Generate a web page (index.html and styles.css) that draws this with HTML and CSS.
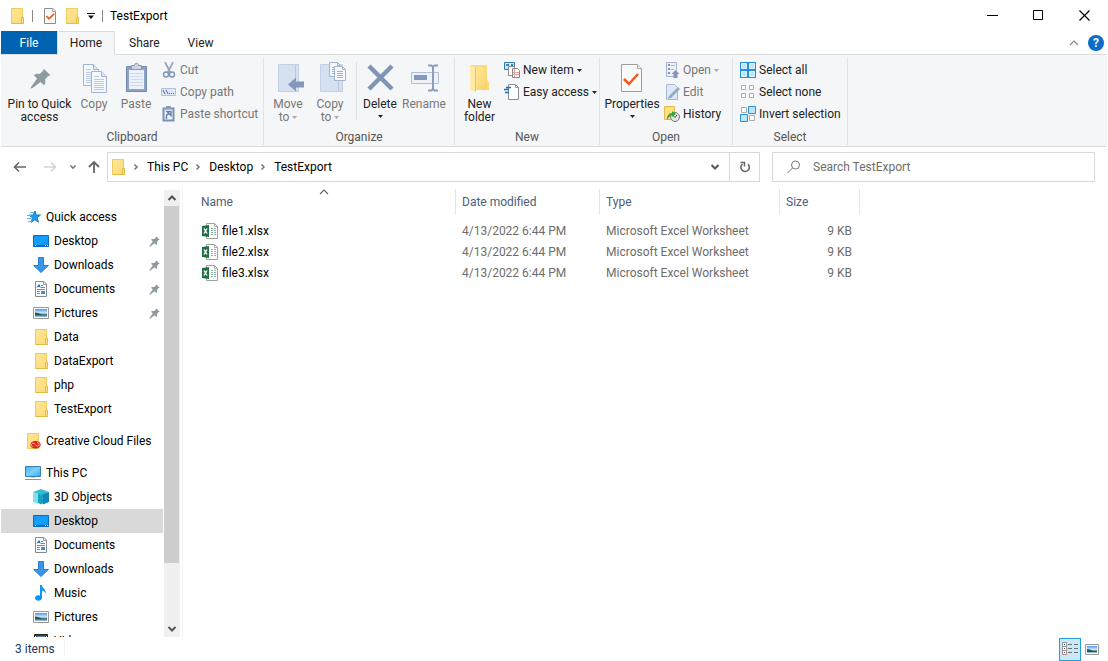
FILE: index.html
```html
<!DOCTYPE html>
<html lang="en">
<head>
<meta charset="utf-8">
<meta name="viewport" content="width=device-width, initial-scale=1">
<title>TestExport</title>
<link rel="stylesheet" href="styles.css">
</head>
<body>
<svg class="defs" aria-hidden="true">
  <defs>
    <linearGradient id="g-folder" x1="0" y1="0" x2="1" y2="1"><stop offset="0" stop-color="#ffe594"/><stop offset="1" stop-color="#fbdc7b"/></linearGradient>
    <linearGradient id="g-screen" x1="0" y1="0" x2="1" y2="1"><stop offset="0" stop-color="#1a93f5"/><stop offset=".5" stop-color="#11a2ff"/><stop offset="1" stop-color="#0c8ceb"/></linearGradient>
    <linearGradient id="g-pc" x1="0" y1="0" x2="1" y2="1"><stop offset="0" stop-color="#3db4f7"/><stop offset=".5" stop-color="#7dd0fb"/><stop offset="1" stop-color="#33abf3"/></linearGradient>
    <linearGradient id="g-photo" x1="0" y1="0" x2="0" y2="1"><stop offset="0" stop-color="#4d97ee"/><stop offset=".5" stop-color="#d4e8f7"/><stop offset=".65" stop-color="#6d9a9c"/><stop offset="1" stop-color="#9cc1d6"/></linearGradient>
    <linearGradient id="g-new" x1="0" y1="0" x2="1" y2="1"><stop offset="0" stop-color="#ffe79b"/><stop offset="1" stop-color="#f9d265"/></linearGradient>
    <symbol id="folder" viewBox="0 0 16 16"><path d="M2.500.5h11v9h1v6h-12z" fill="url(#g-folder)" stroke="#edcb5c"/><path d="M12.500 15V9.500h2v6h-12" fill="#fbe08a" stroke="#e3bc43"/></symbol>
    <symbol id="check" viewBox="0 0 14 16"><path d="M1.500.5h8.500l2.500 2.500v12.500h-11z" fill="#fafafa" stroke="#8d8d8d"/><path d="M9.500.5v3h3" fill="#fff" stroke="#aaa"/><path d="M3.500 8l2.500 2.800 5-5" fill="none" stroke="#ea5a1c" stroke-width="1.700"/></symbol>
    <symbol id="pin" viewBox="0 0 16 16"><path d="M10.500.5l5 5-1.800.7-2.200 2.600c.6 1.800.2 3.200-.9 4.400L8 10.700 2 15.300.5 15.700l.4-1.500L5.400 8 2.900 5.500c1.200-1.100 2.600-1.500 4.400-.9l2.600-2.300z" fill="#8f9ba3"/></symbol>
    <symbol id="desktop" viewBox="0 0 16 12"><path d="M.5.5h15v11H.5z" fill="url(#g-screen)" stroke="#0b6cba"/><path d="M1 10.500h14" stroke="#0b6cba"/><path d="M2 10.500h1M12 10.500h1M14 10.500h1" stroke="#fff"/></symbol>
    <symbol id="download" viewBox="0 0 16 16"><path d="M5.500.5h5v8h4.800L8 15.500.7 8.500h4.800z" fill="#3894e8" stroke="#2a7fce"/></symbol>
    <symbol id="document" viewBox="0 0 14 16"><path d="M1.500.5h8.500l2.500 2.500v12.500h-11z" fill="#fff" stroke="#858b90"/><path d="M9.500.5v3h3" fill="none" stroke="#999"/><path d="M3 6.500l2-3 1.200 3M4 5.500h2" fill="none" stroke="#1774bb"/><path d="M7 4.500h2M7 6.500h4M3 8.500h8" stroke="#3f9ada"/><path d="M3 10.500h3M3 12.500h3" stroke="#888"/><path d="M7 10h4v3H7z" fill="#3e93ca"/></symbol>
    <symbol id="picture" viewBox="0 0 16 12"><path d="M.5.5h15v11H.5z" fill="#fff" stroke="#989898"/><path d="M2 2h12v8H2z" fill="url(#g-photo)"/><path d="M2 5.500l3 .5 4 1.500h5v1H2z" fill="#2b545c"/></symbol>
    <symbol id="star" viewBox="0 0 16 16"><path d="M10 2l1.200 4h4.300l-3.400 2.700 1.400 4.500-3.700-2.500-3.600 2.700 1.200-4.600L4 6.200l4.200-.2z" fill="#209dea" stroke="#1582c8" stroke-width="1"/><path d="M5 3.500h4M2 6.500h4M2 9.500h4M3 12.500h4" stroke="#63b7eb"/></symbol>
    <symbol id="creative" viewBox="0 0 16 16"><path d="M2.500.5h11v15h-11z" fill="url(#g-folder)" stroke="#edcb5c"/><ellipse cx="10.500" cy="11.800" rx="5.200" ry="3.800" fill="#dd2118"/><path d="M12 9.800c2.500-.6 3.200 3 .8 3.500-2 .2-2.800-3.400-5-3.100-2.300.4-2 3.500.4 3.300" fill="none" stroke="#ffd0b0" stroke-width=".9"/></symbol>
    <symbol id="pc" viewBox="0 0 16 16"><path d="M.5 1.500h15v10H.5z" fill="url(#g-pc)" stroke="#3a80ae"/><path d="M6 12h4v1H6z" fill="#c6d0d6"/><path d="M0 14.500h16" stroke="#8597a5"/></symbol>
    <symbol id="cube" viewBox="0 0 16 16"><path d="M0 3l8-3 8 3-8 3z" fill="#35bdd0"/><path d="M0 3l5 1.500V15l-5-2z" fill="#7fe2ee"/><path d="M5 4.500l3 1 3-1v9.300L8 15.500l-3-1.700z" fill="#16a5bc"/><path d="M16 3l-6 2v10.500l6-2.500z" fill="#1384bd"/></symbol>
    <symbol id="music" viewBox="0 0 16 16"><path d="M7 0h2c0 3.500 4.500 4 3.500 9-.4-2-1.700-3.200-3.500-3.500v7C9 17 2 16.500 2 13c0-2.300 3-3.300 5-2.300z" fill="#0b98f4"/></symbol>
    <symbol id="video" viewBox="0 0 16 16"><path d="M1.500 1.500h13v13h-13z" fill="#38424a" stroke="#222"/><path d="M4 3h8v10H4z" fill="#5681c3"/><path d="M2.500 3v12M13.500 3v12" stroke="#fff" stroke-dasharray="1 2"/></symbol>
    <symbol id="excel" viewBox="0 0 16 16"><path d="M4.500.5h8l3 3v12h-11z" fill="#fff" stroke="#a0a0a0"/><path d="M12.500.5v3h3" fill="none" stroke="#aaa"/><path d="M9 5.500h2M12 5.500h2M9 7.500h2M12 7.500h2M9 9.500h2M12 9.500h2M9 11.500h2M12 11.500h2" stroke="#8cb59d"/><path d="M0 3l7-1v12l-7-1z" fill="#1c7145"/><path d="M2 5.500l3 5M5 5.500l-3 5" stroke="#fff" stroke-width="1.400"/></symbol>
    <symbol id="page" viewBox="0 0 18 22"><path d="M1.500.5h10l5 5v16h-15z" fill="#f4f7fc" stroke="#a3b4ce"/><path d="M11.500.5v5h5" fill="#dce5f3" stroke="#a3b4ce"/><path d="M4 5.500h5M4 8.500h10M4 10.500h10M4 12.500h10M4 14.500h10M4 16.500h10M4 18.500h10" stroke="#bccae0"/></symbol>
    <symbol id="page-small" viewBox="0 0 12 15"><path d="M.5.5h8l3 3v11H.5z" fill="#f4f7fc" stroke="#a3b4ce"/><path d="M8.500.5v3h3" fill="none" stroke="#a3b4ce"/><path d="M3 5.500h6M3 7.500h6M3 9.500h6M3 11.500h6" stroke="#9fb2cf"/></symbol>
    <symbol id="chev-right" viewBox="0 0 6 8"><path d="M1.500 1.500L4 4 1.500 6.500" fill="none" stroke="#777" stroke-width="1.500"/></symbol>
    <symbol id="chev-down" viewBox="0 0 10 8"><path d="M1.500 2L5 5.500 8.500 2" fill="none" stroke="currentColor" stroke-width="2"/></symbol>
    <symbol id="chev-up" viewBox="0 0 10 8"><path d="M1 6l4-4 4 4" fill="none" stroke="currentColor" stroke-width="1.200"/></symbol>
    <symbol id="tri" viewBox="0 0 5 3"><path d="M0 0h5L2.500 3z" fill="currentColor"/></symbol>
  </defs>
</svg>

<header class="titlebar">
  <svg class="i16"><use href="#folder"/></svg>
  <span class="tick"></span>
  <button class="quick" aria-label="Properties"><svg class="i14"><use href="#check"/></svg></button>
  <button class="quick" aria-label="New folder"><svg class="i16"><use href="#folder"/></svg></button>
  <button class="quick" aria-label="Customize toolbar"><svg class="custom" viewBox="0 0 8 6"><path d="M0 .5h8" stroke="#111"/><path d="M1 2.500h6L4 6z" fill="#111"/></svg></button>
  <span class="tick"></span>
  <h1 class="title">TestExport</h1>
  <div class="winbuttons">
    <button aria-label="Minimize"><svg viewBox="0 0 11 11"><path d="M0 5.500h11" stroke="#000"/></svg></button>
    <button aria-label="Maximize"><svg viewBox="0 0 11 11"><path d="M.5.5h9v9h-9z" fill="none" stroke="#000"/></svg></button>
    <button aria-label="Close"><svg viewBox="0 0 11 11"><path d="M.5.5l10 10M10.500.5l-10 10" stroke="#000" stroke-width="1.200"/></svg></button>
  </div>
</header>

<nav class="tabs">
  <button class="tab file">File</button>
  <button class="tab active">Home</button>
  <button class="tab">Share</button>
  <button class="tab">View</button>
  <div class="tabtools">
    <button class="collapse" aria-label="Collapse ribbon"><svg class="chev"><use href="#chev-up"/></svg></button>
    <button class="help" aria-label="Help">?</button>
  </div>
</nav>

<section class="ribbon">
  <div class="group clipboard">
    <div class="tools">
      <button class="big pinbtn"><svg class="i32" viewBox="0 0 32 32"><use href="#pin" x="6" y="6" width="21" height="21"/></svg><span>Pin to Quick access</span></button>
      <button class="big copybtn off"><svg class="i32" viewBox="0 0 32 32"><use href="#page" x="4" y="2" width="18" height="22"/><use href="#page" x="12" y="9" width="18" height="22"/></svg><span>Copy</span></button>
      <button class="big pastebtn off"><svg class="i32" viewBox="0 0 32 32"><path d="M6.500 4.500h20v25h-20z" fill="#8ea2c3" stroke="#7389ae"/><path d="M9 8h15v19H9z" fill="#edf2fa"/><path d="M10 11.500h13M10 14.500h13M10 17.500h13M10 20.500h13M10 23.500h13" stroke="#cfdaea"/><path d="M11.500 7.500v-4h3c0-3 4-3 4 0h3v4z" fill="#cbd4e2" stroke="#8897af"/></svg><span>Paste</span></button>
      <div class="smalls">
        <button class="small off"><svg class="i16" viewBox="0 0 16 16"><path d="M4 0l5.500 11M12 0L6.500 11" stroke="#94a5bd" stroke-width="1.700"/><circle cx="5" cy="12.500" r="2.500" fill="none" stroke="#8297b7" stroke-width="1.500"/><circle cx="11" cy="12.500" r="2.500" fill="none" stroke="#8297b7" stroke-width="1.500"/></svg>Cut</button>
        <button class="small off"><svg class="i16" viewBox="0 0 16 16"><path d="M.5 4.500h14v7H.5z" fill="#dce6f4" stroke="#b2c0d6"/><path d="M2 6l2 4M5 6l2 4M8 9.500h1M10 9.500h1M12 9.500h1" stroke="#596f91"/></svg>Copy path</button>
        <button class="small off"><svg class="i16" viewBox="0 0 16 16"><path d="M2.500 2.500h10v12h-10z" fill="#eef3fa" stroke="#7b91b5" stroke-width="2"/><path d="M5 0h5v3H5z" fill="#8b9bb5"/><path d="M5.500 13V10c0-1 1-2 2.500-2M6 5.500h4v4z" fill="none" stroke="#6883ad" stroke-width="1.500"/></svg>Paste shortcut</button>
      </div>
    </div>
    <div class="caption">Clipboard</div>
  </div>

  <div class="group organize">
    <div class="tools">
      <button class="big move off"><svg class="i32" viewBox="0 0 32 32"><path d="M6.500 2.500h20v27h-20z" fill="#d5e0f1" stroke="#c3d0e5"/><path d="M23.500 3v26" stroke="#b9c8df"/><path d="M16 22.500l8-7v4h8v6h-8v4z" fill="#8498ba"/></svg><span>Move<br>to <svg class="tri"><use href="#tri"/></svg></span></button>
      <button class="big move off"><svg class="i32" viewBox="0 0 32 32"><path d="M6.500 2.500h22v27h-22z" fill="#d5e0f1" stroke="#c3d0e5"/><path d="M24.500 3v26" stroke="#b9c8df"/><use href="#page-small" x="15" y="0" width="12" height="15"/><use href="#page-small" x="20" y="4" width="12" height="15"/></svg><span>Copy<br>to <svg class="tri"><use href="#tri"/></svg></span></button>
      <span class="rule"></span>
      <button class="big delete"><svg class="i32" viewBox="0 0 32 32"><path d="M5 4l23 23M28 4L5 27" stroke="#8094b5" stroke-width="4.500"/></svg><span>Delete</span><svg class="tri"><use href="#tri"/></svg></button>
      <button class="big rename off"><svg class="i32" viewBox="0 0 32 32"><path d="M3.500 10.500h27v11h-27z" fill="#eef2f8" stroke="#b0c0d8"/><path d="M6 13h13v5H6z" fill="#8298bd"/><path d="M20 3.500h3.500L25 5l1.500-1.500H30M20 28.500h3.500L25 27l1.500 1.500H30M25 5v22" fill="none" stroke="#899ebe" stroke-width="2"/></svg><span>Rename</span></button>
    </div>
    <div class="caption">Organize</div>
  </div>

  <div class="group new">
    <div class="tools">
      <button class="big newfolder"><svg class="i32" viewBox="0 0 32 32"><path d="M6 3h17v15l2 2v8H6z" fill="#fbda7c"/><path d="M6 3l6 3v24l-6-2z" fill="#ffe9a6"/><path d="M12 6l3-1h7v-2h1v25H12z" fill="url(#g-new)"/><path d="M12 6v24l-1-1V6z" fill="#eec65b"/></svg><span>New folder</span></button>
      <div class="smalls">
        <button class="small"><svg class="i16" viewBox="0 0 16 16"><path d="M.5.5h10v7H.5z" fill="#cee8f7" stroke="#3179a7"/><path d="M2 2h3v2H2zM7 2h2v2H7z" fill="#2e89bd"/><path d="M4.500 4.500h6v9h-6z" fill="#fff" stroke="#888"/><path d="M8.500 6.500h5l2 2v7h-7z" fill="#fff" stroke="#888"/><path d="M10.500 7v8M9 10.500h6M9 12.500h6" stroke="#e6a2a2"/></svg>New item<svg class="tri"><use href="#tri"/></svg></button>
        <button class="small"><svg class="i16" viewBox="0 0 16 16"><path d="M4.500.5h7l3 3v12h-10z" fill="#fff" stroke="#8e8e8e"/><path d="M11.500.5v3h3" fill="none" stroke="#999"/><path d="M2 3.500h5M0 5.500h5M1 8.500h4" stroke="#1c6fb0" stroke-width="1.300"/></svg>Easy access<svg class="tri"><use href="#tri"/></svg></button>
      </div>
    </div>
    <div class="caption">New</div>
  </div>

  <div class="group open">
    <div class="tools">
      <button class="big props"><svg class="i32" viewBox="0 0 32 32"><path d="M5.500 2.500h16l4 4v23h-20z" fill="#fafafa" stroke="#9d9d9d"/><path d="M21.500 2.500v4h4" fill="#eee" stroke="#aaa"/><path d="M8 17l5 5 9-10" fill="none" stroke="#f05a1a" stroke-width="2.500"/></svg><span>Properties</span><svg class="tri"><use href="#tri"/></svg></button>
      <div class="smalls">
        <button class="small off"><svg class="i16" viewBox="0 0 16 16"><path d="M2.500.5h10v14h-10z" fill="#edf2f8" stroke="#a7b6cd"/><path d="M4 2h2v2H4zM4 6h2v2H4zM4 10h2v2H4z" fill="#8196b7"/><path d="M7 3.500h4M7 7.500h3" stroke="#a7b6cd"/><path d="M7.500 12l4-4 4 4h-2v4h-4v-4z" fill="#8297bb"/></svg>Open<svg class="tri"><use href="#tri"/></svg></button>
        <button class="small off"><svg class="i16" viewBox="0 0 16 16"><path d="M2.500.5h8l3 3v12h-11z" fill="#dfe8f5" stroke="#a7b9d3"/><path d="M5 12l9-9 2 2-9 9-3 1z" fill="#94a9c8"/></svg>Edit</button>
        <button class="small"><svg class="i16" viewBox="0 0 16 16"><path d="M.5.5h10v13H.5z" fill="#ffdf7e" stroke="#e2bc48"/><circle cx="11" cy="11" r="4.500" fill="#e0e5e7" stroke="#737b80"/><path d="M13 9l-2 2.500L9.500 10" fill="none" stroke="#555"/><path d="M3 14c-.5-4 2-7 5-7V5l4 3-4 3V9.500c-2 0-3.500 2-5 4.500z" fill="#2dab35"/></svg>History</button>
      </div>
    </div>
    <div class="caption">Open</div>
  </div>

  <div class="group select">
    <div class="tools">
      <div class="smalls">
        <button class="small"><svg class="i16" viewBox="0 0 16 16"><path d="M0 0h16v16H0z" fill="#2490df"/><path d="M1.500 1.500h5v5h-5zM9.500 1.500h5v5h-5zM1.500 9.500h5v5h-5zM9.500 9.500h5v5h-5z" fill="#bfe5fa" stroke="#dff4fe"/></svg>Select all</button>
        <button class="small"><svg class="i16" viewBox="0 0 16 16"><path d="M1.500 1.500h4v4h-4zM9.500 1.500h4v4h-4zM1.500 9.500h4v4h-4zM9.500 9.500h4v4h-4z" fill="#fff" stroke="#aaa"/></svg>Select none</button>
        <button class="small"><svg class="i16" viewBox="0 0 16 16"><path d="M1.500 1.500h5v5h-5zM9.500 9.500h5v5h-5z" fill="#fff" stroke="#aaa"/><path d="M8.500.5h7v7h-7zM.5 8.500h7v7h-7z" fill="#bfe5fa" stroke="#2490df"/></svg>Invert selection</button>
      </div>
    </div>
    <div class="caption">Select</div>
  </div>
</section>

<section class="navbar">
  <div class="arrows">
    <button aria-label="Back"><svg class="arrow" viewBox="0 0 14 14"><path d="M13 7H1.500M6 2.500L1.500 7 6 11.500" fill="none" stroke="#666" stroke-width="1.600"/></svg></button>
    <button aria-label="Forward"><svg class="arrow" viewBox="0 0 14 14"><path d="M1 7h11.500M8 2.500L12.500 7 8 11.500" fill="none" stroke="#d3d3d3" stroke-width="1.600"/></svg></button>
    <button class="recent" aria-label="Recent locations"><svg viewBox="0 0 10 8"><use href="#chev-down"/></svg></button>
    <button class="up" aria-label="Up"><svg class="arrow" viewBox="0 0 14 14"><path d="M7 13V2M2 7l5-5 5 5" fill="none" stroke="#666" stroke-width="1.800"/></svg></button>
  </div>
  <div class="address">
    <svg class="i16"><use href="#folder"/></svg>
    <svg class="sep"><use href="#chev-right"/></svg>
    <a href="#pc-root">This PC</a>
    <svg class="sep"><use href="#chev-right"/></svg>
    <a href="#desktop-root">Desktop</a>
    <svg class="sep"><use href="#chev-right"/></svg>
    <a href="#testexport">TestExport</a>
    <button class="drop" aria-label="Previous locations"><svg class="chev"><use href="#chev-down"/></svg></button>
    <button class="refresh" aria-label="Refresh"><svg viewBox="0 0 12 12"><path d="M9 3.200A4.200 4.200 0 1 1 3.500 3" fill="none" stroke="#666" stroke-width="1.600"/><path d="M1.500 1.500h4v4" fill="none" stroke="#666" stroke-width="1.500"/></svg></button>
  </div>
  <label class="search">
    <svg viewBox="0 0 14 14"><circle cx="8.500" cy="5" r="4" fill="none" stroke="#777"/><path d="M5.500 8L.5 13" stroke="#777"/></svg>
    <input type="text" placeholder="Search TestExport" aria-label="Search TestExport">
  </label>
</section>

<main class="main">
  <aside class="side">
    <div class="tree">
      <ul>
        <li class="root"><a href="#q"><svg class="i16"><use href="#star"/></svg>Quick access</a></li>
        <li><a href="#q1"><svg class="i16"><use href="#desktop"/></svg>Desktop<svg class="pin"><use href="#pin"/></svg></a></li>
        <li><a href="#q2"><svg class="i16"><use href="#download"/></svg>Downloads<svg class="pin"><use href="#pin"/></svg></a></li>
        <li><a href="#q3"><svg class="i16"><use href="#document"/></svg>Documents<svg class="pin"><use href="#pin"/></svg></a></li>
        <li><a href="#q4"><svg class="i16"><use href="#picture"/></svg>Pictures<svg class="pin"><use href="#pin"/></svg></a></li>
        <li><a href="#q5"><svg class="i16"><use href="#folder"/></svg>Data</a></li>
        <li><a href="#q6"><svg class="i16"><use href="#folder"/></svg>DataExport</a></li>
        <li><a href="#q7"><svg class="i16"><use href="#folder"/></svg>php</a></li>
        <li><a href="#q8"><svg class="i16"><use href="#folder"/></svg>TestExport</a></li>
      </ul>
      <ul>
        <li class="root"><a href="#c"><svg class="i16"><use href="#creative"/></svg>Creative Cloud Files</a></li>
      </ul>
      <ul>
        <li class="root"><a href="#p"><svg class="i16"><use href="#pc"/></svg>This PC</a></li>
        <li><a href="#p1"><svg class="i16"><use href="#cube"/></svg>3D Objects</a></li>
        <li class="current"><a href="#p2"><svg class="i16"><use href="#desktop"/></svg>Desktop</a></li>
        <li><a href="#p3"><svg class="i16"><use href="#document"/></svg>Documents</a></li>
        <li><a href="#p4"><svg class="i16"><use href="#download"/></svg>Downloads</a></li>
        <li><a href="#p5"><svg class="i16"><use href="#music"/></svg>Music</a></li>
        <li><a href="#p6"><svg class="i16"><use href="#picture"/></svg>Pictures</a></li>
        <li><a href="#p7"><svg class="i16"><use href="#video"/></svg>Videos</a></li>
      </ul>
    </div>
    <div class="scroll">
      <button aria-label="Scroll up"><svg class="chev" viewBox="0 0 10 8"><path d="M1.500 6L5 2.500 8.500 6" fill="none" stroke="#505050" stroke-width="2"/></svg></button>
      <div class="track"><div class="thumb"></div></div>
      <button aria-label="Scroll down"><svg class="chev"><use href="#chev-down"/></svg></button>
    </div>
  </aside>
  <section class="files">
    <table>
      <thead>
        <tr>
          <th class="c-name">Name<svg class="sort"><use href="#chev-up"/></svg></th>
          <th class="c-date">Date modified</th>
          <th class="c-type">Type</th>
          <th class="c-size">Size</th>
          <th class="c-rest"></th>
        </tr>
      </thead>
      <tbody>
        <tr><td><span class="fname"><svg class="i16"><use href="#excel"/></svg>file1.xlsx</span></td><td>4/13/2022 6:44 PM</td><td>Microsoft Excel Worksheet</td><td class="num">9 KB</td><td></td></tr>
        <tr><td><span class="fname"><svg class="i16"><use href="#excel"/></svg>file2.xlsx</span></td><td>4/13/2022 6:44 PM</td><td>Microsoft Excel Worksheet</td><td class="num">9 KB</td><td></td></tr>
        <tr><td><span class="fname"><svg class="i16"><use href="#excel"/></svg>file3.xlsx</span></td><td>4/13/2022 6:44 PM</td><td>Microsoft Excel Worksheet</td><td class="num">9 KB</td><td></td></tr>
      </tbody>
    </table>
  </section>
</main>

<footer class="status">
  <span class="count">3 items</span>
  <div class="views">
    <button class="view on" aria-label="Details view"><svg viewBox="0 0 16 14"><path d="M.5.5h4v4h-4zM.5 4.500h4v4h-4zM.5 8.500h4v4h-4z" fill="#fff" stroke="#999"/><path d="M2 2.500h1M2 6.500h1" stroke="#456"/><path d="M2 10.500h1" stroke="#c22"/><path d="M6 2.500h4M12 2.500h4M6 6.500h4M12 6.500h4M6 10.500h4M12 10.500h4" stroke="#707070"/></svg></button>
    <button class="view" aria-label="Large icons view"><svg viewBox="0 0 14 11"><path d="M.5.5h13v10H.5z" fill="#fff" stroke="#989898"/><path d="M2 2h10v7H2z" fill="url(#g-photo)"/><path d="M2 5l3 .5L8 7h4v1H2z" fill="#2b545c"/></svg></button>
  </div>
</footer>
</body>
</html>
```
FILE: styles.css
```css
* { box-sizing: border-box; }
body {
  margin: 0;
  padding: 0 1px;
  height: 100vh;
  display: flex;
  flex-direction: column;
  overflow: hidden;
  background: #fff;
  color: #000;
  font: 12px/16px Roboto, "Open Sans", sans-serif;
}
button, input { font: inherit; color: inherit; border: 0; background: none; padding: 0; margin: 0; }
a { color: inherit; text-decoration: none; }
ul { list-style: none; margin: 0; padding: 0; }
svg { display: block; flex: none; }
.defs { position: absolute; width: 0; height: 0; }
.i16 { width: 16px; height: 16px; }
.i14 { width: 14px; height: 16px; }
.i32 { width: 32px; height: 32px; }
.chev { width: 10px; height: 8px; color: #555; }
.tri { display: inline-block; width: 5px; height: 3px; vertical-align: middle; }

.titlebar { display: flex; align-items: center; flex: none; height: 31px; padding-left: 8px; }
.tick { width: 1px; height: 12px; margin: 0 10px 0 7px; background: #888; }
.quick { margin-right: 7px; }
.quick + .quick + .quick { margin-right: 0; }
.custom { width: 8px; height: 6px; }
.title { margin: 0 0 0 -3px; font-size: 12px; font-weight: 400; }
.winbuttons { display: flex; margin-left: auto; }
.winbuttons button { width: 46px; height: 30px; display: grid; place-items: center; }
.winbuttons svg { width: 11px; height: 11px; }

.tabs { display: flex; flex: none; height: 24px; border-bottom: 1px solid #dadbdc; }
.tab { height: 24px; padding: 0 14px; color: #222; }
.tab.file { width: 56px; height: 23px; background: #0063b1; color: #fff; }
.tab.active { width: 58px; padding: 0 0 1px; background: #f5f6f7; border: 1px solid #dadbdc; border-bottom: 0; }
.tabtools { display: flex; align-items: center; gap: 9px; margin-left: auto; padding-right: 3px; }
.collapse .chev { color: #888; }
.help { width: 16px; height: 16px; border-radius: 50%; background: #0b6cca; color: #fff; font-weight: 700; line-height: 16px; }

.ribbon { display: flex; flex: none; height: 92px; background: #f5f6f7; border-bottom: 1px solid #dadbdc; }
.group { display: flex; flex: none; flex-direction: column; justify-content: space-between; margin: 2px 0 1px; padding-top: 2px; border-right: 1px solid #e2e3e4; }
.caption { text-align: center; color: #555; }
.tools { display: flex; }
.big { display: flex; flex-direction: column; align-items: center; padding-top: 3px; line-height: 13px; color: #222; }
.big span { margin-top: 4px; }
.big > .tri { margin-top: 4px; }
.smalls { display: flex; flex-direction: column; }
.small { display: flex; align-items: center; gap: 3px; height: 22px; color: #222; white-space: nowrap; }
.off { color: #777; }
.off .tri { color: #aaa; }
.clipboard { width: 263px; }
.organize { width: 191px; }
.new { width: 145px; }
.open { width: 133px; }
.select { width: 115px; }
.pinbtn { width: 75px; padding-left: 2px; }
.copybtn { width: 36px; }
.pastebtn { width: 49px; padding-right: 1px; }
.move { width: 42px; }
.organize .tools { padding-left: 3px; }
.rule { width: 1px; height: 58px; margin: 3px 0 0 5px; background: #e0e1e2; }
.delete { width: 46px; }
.rename { width: 42px; }
.newfolder { width: 49px; }
.props { width: 64px; }
.select .tools { padding-left: 7px; }

.navbar { display: flex; align-items: center; flex: none; height: 40px; padding-right: 12px; }
.arrows { display: flex; align-items: center; flex: none; width: 106px; padding-left: 12px; }
.arrows button { display: block; flex: none; width: 30px; }
.arrows .recent { width: 14px; margin-left: -4px; margin-right: 4px; color: #777; }
.arrows .up { width: 14px; }
.arrows svg { width: 14px; height: 14px; }
.arrows .recent svg { width: 8px; height: 6px; }
.address { display: flex; align-items: center; flex: 1; height: 30px; padding-left: 2px; border: 1px solid #d9d9d9; }
.sep { width: 6px; height: 8px; margin: 0 8px 0 7px; }
.address a { white-space: nowrap; }
.drop { margin-left: auto; padding: 0 9px; }
.refresh { align-self: stretch; width: 30px; border-left: 1px solid #d9d9d9; display: grid; place-items: center; }
.refresh svg { width: 12px; height: 12px; }
.search { display: flex; align-items: center; gap: 12px; flex: 0 1 323px; height: 30px; margin-left: 12px; padding-left: 14px; border: 1px solid #d9d9d9; }
.search svg { width: 14px; height: 14px; }
.search input { flex: 1; min-width: 0; outline: 0; }
.search input::placeholder { color: #6d6d6d; opacity: 1; }

.main { display: flex; flex: 1; min-height: 0; }
.side { display: flex; gap: 1px; flex: none; width: 182px; padding: 3px 2px 0 0; border-right: 1px solid #f3f3f3; }
.tree { flex: 1; overflow: hidden; padding-top: 15px; }
.tree ul + ul { margin-top: 8px; }
.tree a { display: flex; align-items: center; gap: 5px; height: 24px; padding: 0 3px 0 32px; white-space: nowrap; }
.tree .root a { padding-left: 24px; }
.current { background: #d9d9d9; }
.pin { width: 11px; height: 11px; margin-left: auto; }
.scroll { display: flex; flex-direction: column; width: 16px; background: #f0f0f0; }
.scroll button { display: grid; place-items: center; height: 16px; }
.track { flex: 1; }
.thumb { width: 15px; height: 86%; background: #cdcdcd; }

.files { flex: 1; min-width: 0; padding-top: 2px; }
table { width: 100%; table-layout: fixed; border-collapse: separate; border-spacing: 0; }
th { position: relative; height: 26px; padding: 0 0 0 6px; text-align: left; font-weight: 400; color: #4c607a; border-right: 1px solid #e5e5e5; }
.c-name { width: 273px; padding-left: 18px; }
.c-date { width: 144px; }
.c-type { width: 180px; }
.c-size { width: 80px; }
.c-rest { border: 0; }
.sort { position: absolute; top: -1px; left: 50%; width: 10px; height: 8px; color: #666; }
td { height: 21px; padding: 0 0 0 6px; color: #6d6d6d; white-space: nowrap; }
td:first-child { padding-left: 19px; }
tbody::before { content: ""; display: block; height: 5px; }
td.num { padding-right: 8px; text-align: right; }
.fname { display: flex; align-items: center; gap: 4px; color: #000; }

.status { display: flex; align-items: center; flex: none; height: 24px; padding: 0 4px 0 14px; color: #1e395b; }
.count { padding-right: 9px; border-right: 1px solid #f0f0f0; }
.views { display: flex; margin-left: auto; }
.view { display: grid; place-items: center; width: 22px; height: 23px; border: 1px solid transparent; }
.view.on { background: #cce8f6; border-color: #26a0da; }
.view svg { width: 16px; height: 14px; }
.view:not(.on) svg { width: 14px; height: 11px; }
```
